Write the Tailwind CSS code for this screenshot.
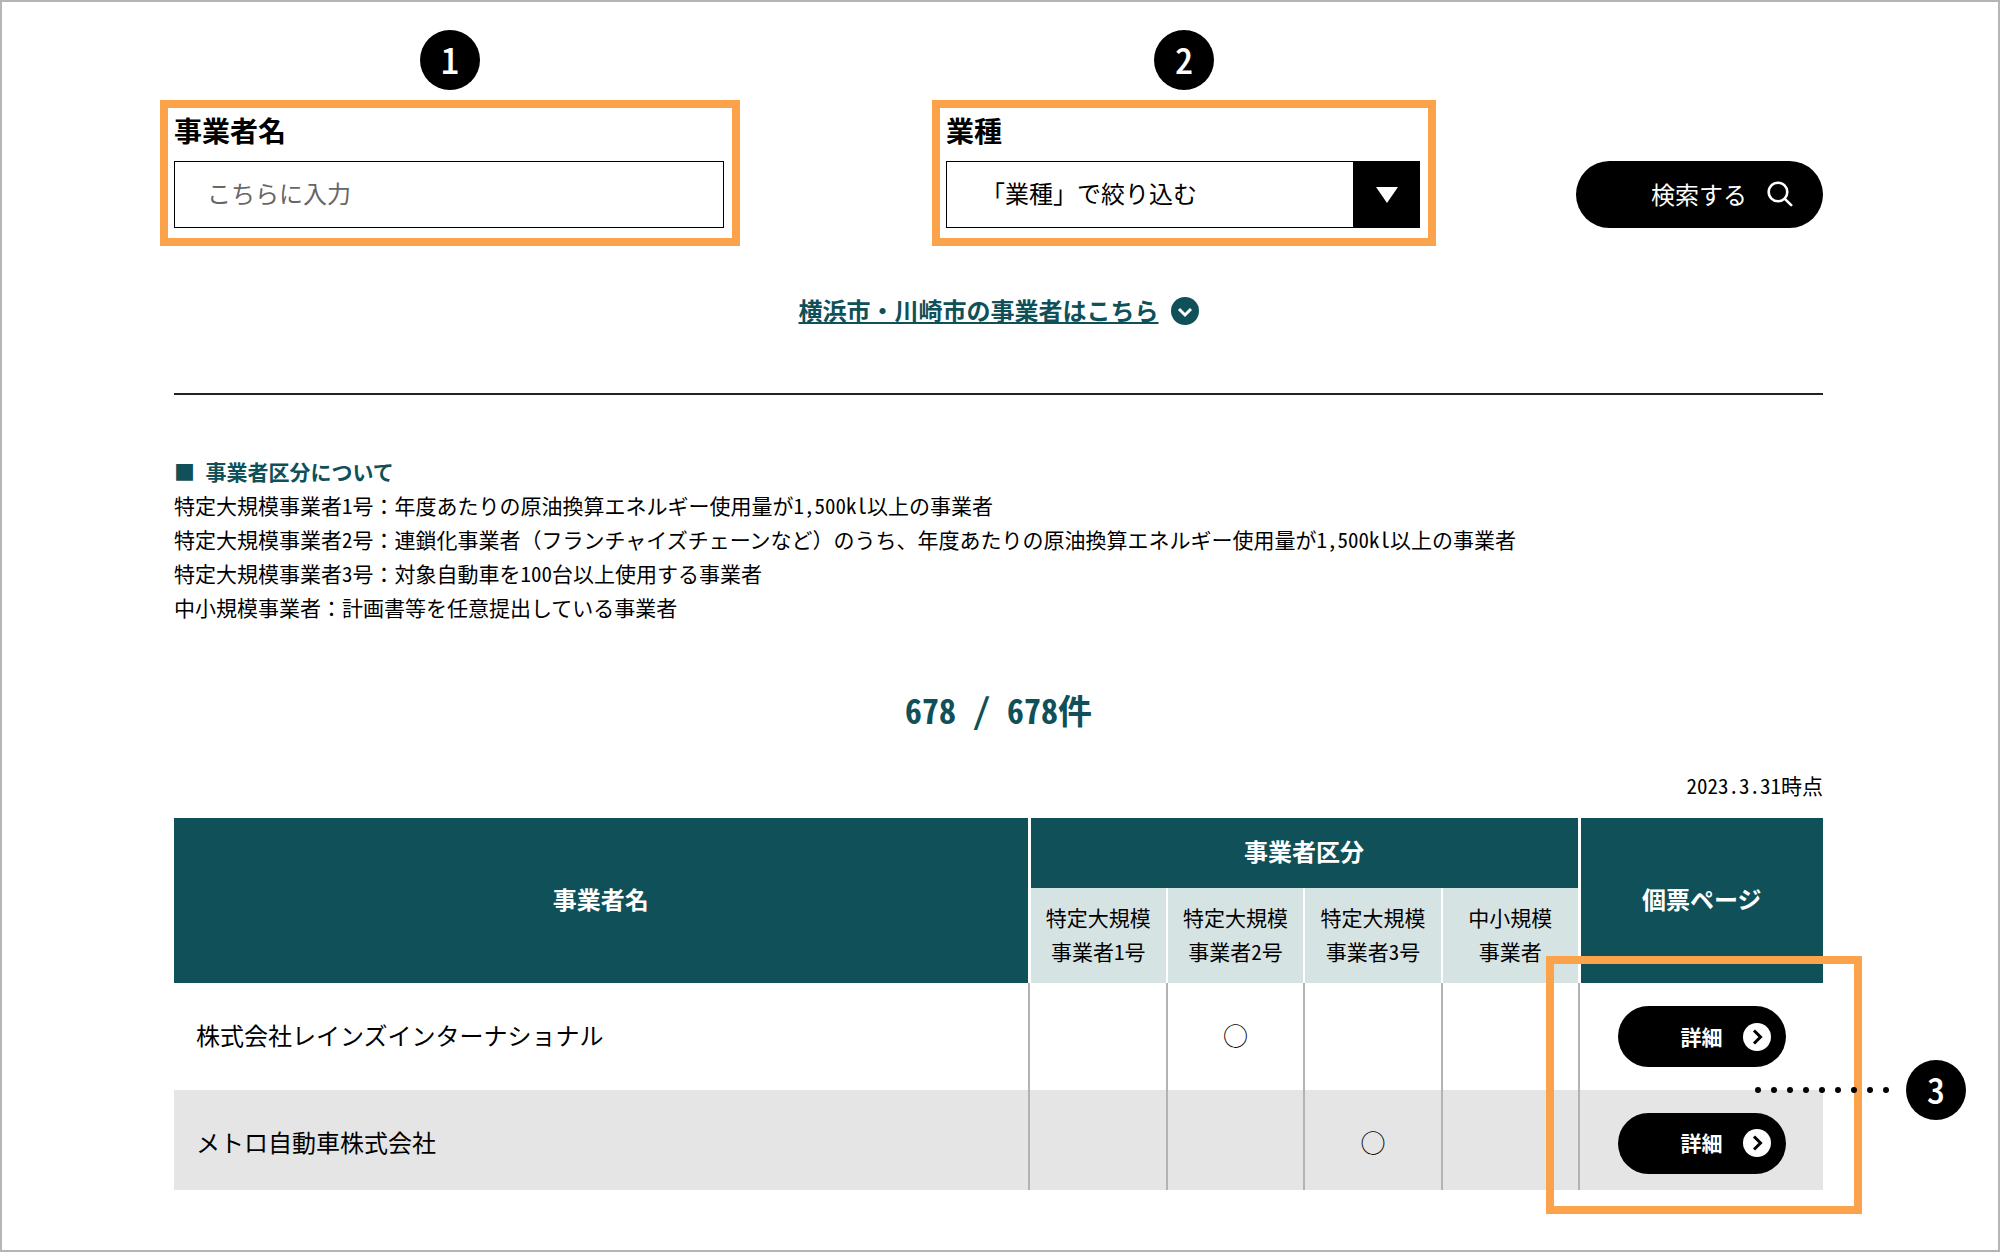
<!DOCTYPE html>
<html lang="ja">
<head>
<meta charset="utf-8">
<meta name="viewport" content="width=device-width, initial-scale=1">
<title>事業者検索</title>
<script src="https://cdn.jsdelivr.net/npm/@tailwindcss/browser@4"></script>
</head>
<body class="min-h-screen border-2 border-[#b5b5b5] bg-white pt-7 pr-[175px] pb-[60px] pl-[172px] font-['Noto_Sans_CJK_JP',sans-serif] text-[21px] leading-[34px] text-black">

  <!-- 検索フォーム -->
  <form class="flex items-end">
    <div class="-ml-3.5 flex flex-[580] flex-col items-center">
      <span class="flex size-[60px] items-center justify-center rounded-full bg-black pb-1 text-4xl font-medium text-white [font-feature-settings:'hwid']">1</span>
      <div class="mt-2.5 w-full border-8 border-[#faa34a] pr-2 pb-2.5 pl-1.5">
        <label for="name" class="mb-[9px] block text-[28px] leading-[44px] font-bold">事業者名</label>
        <input id="name" type="text" placeholder="こちらに入力" class="block h-[67px] w-full border border-black pb-1 pl-8 text-2xl placeholder:text-[#666]">
      </div>
    </div>
    <div class="ml-48 flex flex-[504] flex-col items-center">
      <span class="flex size-[60px] items-center justify-center rounded-full bg-black pb-1 text-4xl font-medium text-white [font-feature-settings:'hwid']">2</span>
      <div class="mt-2.5 w-full border-8 border-[#faa34a] pr-2 pb-2.5 pl-1.5">
        <label for="industry" class="mb-[9px] block text-[28px] leading-[44px] font-bold">業種</label>
        <div class="relative">
          <select id="industry" class="block h-[67px] w-full appearance-none border border-black bg-white pb-1 pl-[34px] text-2xl">
            <option>「業種」で絞り込む</option>
          </select>
          <span class="pointer-events-none absolute inset-y-0 right-0 flex w-[67px] items-center justify-center bg-black">
            <svg class="h-4 w-[22px]" viewBox="0 0 22 16" fill="#fff"><path d="M0 0h22L11 16z"/></svg>
          </span>
        </div>
      </div>
    </div>
    <button type="submit" class="mb-[18px] ml-[140px] flex h-[67px] w-[247px] items-center justify-end gap-5 rounded-full bg-black pr-[30px] pb-0.5 text-2xl text-white">
      検索する
      <svg class="size-[26px]" viewBox="0 0 26 26" fill="none" stroke="#fff" stroke-width="2.6" stroke-linecap="round"><circle cx="11" cy="11" r="9.3"/><path d="M17.8 17.8l6.4 6.4"/></svg>
    </button>
  </form>

  <!-- 横浜市・川崎市へのリンク -->
  <div class="mt-[46px] flex items-center justify-center gap-3 text-2xl leading-9 font-bold text-[#0f5059]">
    <a href="#other" class="pb-0.5 underline decoration-2 underline-offset-2 [text-decoration-skip-ink:none]">横浜市・川崎市の事業者はこちら</a>
    <svg class="size-7" viewBox="0 0 28 28"><circle cx="14" cy="14" r="14" fill="#0f5059"/><path d="M8 12l6 6 6-6" fill="none" stroke="#fff" stroke-width="3"/></svg>
  </div>

  <hr class="mt-[63px] border-t-2 border-[#222]">

  <!-- 事業者区分の説明 -->
  <section class="mt-[59px]">
    <h2 class="font-bold text-[#0f5059] [font-feature-settings:'hwid']">■ 事業者区分について</h2>
    <p>特定大規模事業者<span class="[font-feature-settings:'hwid']">1</span>号：年度あたりの原油換算エネルギー使用量が<span class="[font-feature-settings:'hwid']">1,500kl</span>以上の事業者</p>
    <p>特定大規模事業者<span class="[font-feature-settings:'hwid']">2</span>号：連鎖化事業者（フランチャイズチェーンなど）のうち、年度あたりの原油換算エネルギー使用量が<span class="[font-feature-settings:'hwid']">1,500kl</span>以上の事業者</p>
    <p>特定大規模事業者<span class="[font-feature-settings:'hwid']">3</span>号：対象自動車を<span class="[font-feature-settings:'hwid']">100</span>台以上使用する事業者</p>
    <p>中小規模事業者：計画書等を任意提出している事業者</p>
  </section>

  <p class="mt-[62px] text-center text-[34px] leading-[48px] font-bold text-[#0f5059] [font-feature-settings:'hwid']">678 / 678件</p>
  <p class="mt-[34px] text-right [font-feature-settings:'hwid']">2023.3.31時点</p>

  <!-- 事業者一覧 -->
  <div class="relative mt-4">
    <table class="w-full table-fixed border-collapse [font-feature-settings:'hwid']">
      <colgroup>
        <col>
        <col class="w-[138px]">
        <col class="w-[137px]">
        <col class="w-[138px]">
        <col class="w-[137px]">
        <col class="w-[244px]">
      </colgroup>
      <thead>
        <tr class="h-[70px] bg-[#0f5059] text-2xl text-white">
          <th rowspan="2" class="pb-1 font-bold">事業者名</th>
          <th colspan="4" class="border-x-3 border-white pb-1 font-bold">事業者区分</th>
          <th rowspan="2" class="pb-1 font-bold">個票ページ</th>
        </tr>
        <tr class="h-[95px] bg-[#d6e3e3]">
          <th class="border-l-3 border-white pb-1 font-normal">特定大規模<br>事業者1号</th>
          <th class="border-l-2 border-white pb-1 font-normal">特定大規模<br>事業者2号</th>
          <th class="border-l-2 border-white pb-1 font-normal">特定大規模<br>事業者3号</th>
          <th class="border-r-3 border-l-2 border-white pb-1 font-normal">中小規模<br>事業者</th>
        </tr>
      </thead>
      <tbody class="text-2xl">
        <tr class="h-[107px]">
          <td class="pb-1 pl-[22px]">株式会社レインズインターナショナル</td>
          <td class="border-l-2 border-[#b3b3b3]"></td>
          <td class="border-l-2 border-[#b3b3b3] pb-1 text-center font-bold">◯</td>
          <td class="border-l-2 border-[#b3b3b3]"></td>
          <td class="border-x-2 border-[#b3b3b3]"></td>
          <td>
            <a href="#detail-1" class="mx-auto flex h-[61px] w-42 items-center justify-end gap-5 rounded-full bg-black pr-[15px] text-[21px] font-bold text-white">
              <span class="pb-0.5">詳細</span>
              <svg class="size-7" viewBox="0 0 28 28"><circle cx="14" cy="14" r="14" fill="#fff"/><path d="M11 7.5l6.5 6.5-6.5 6.5" fill="none" stroke="#000" stroke-width="3"/></svg>
            </a>
          </td>
        </tr>
        <tr class="h-[100px] bg-[#e5e5e5]">
          <td class="pt-1 pl-[22px]">メトロ自動車株式会社</td>
          <td class="border-l-2 border-[#b3b3b3]"></td>
          <td class="border-l-2 border-[#b3b3b3]"></td>
          <td class="border-l-2 border-[#b3b3b3] pt-1 text-center font-bold">◯</td>
          <td class="border-x-2 border-[#b3b3b3]"></td>
          <td class="pt-1.5">
            <a href="#detail-2" class="mx-auto flex h-[61px] w-42 items-center justify-end gap-5 rounded-full bg-black pr-[15px] text-[21px] font-bold text-white">
              <span class="pb-0.5">詳細</span>
              <svg class="size-7" viewBox="0 0 28 28"><circle cx="14" cy="14" r="14" fill="#fff"/><path d="M11 7.5l6.5 6.5-6.5 6.5" fill="none" stroke="#000" stroke-width="3"/></svg>
            </a>
          </td>
        </tr>
      </tbody>
    </table>

    <!-- 説明用の枠と番号 -->
    <div class="pointer-events-none absolute top-[138px] -right-[39px] h-[258px] w-[316px] border-8 border-[#faa34a]"></div>
    <div class="pointer-events-none absolute top-[242px] -right-[143px] flex items-center gap-[17px]">
      <svg class="h-1.5 w-[134px]" viewBox="0 0 134 6"><path d="M3 3h129" stroke="#000" stroke-width="6" stroke-linecap="round" stroke-dasharray="0 16"/></svg>
      <span class="flex size-[60px] items-center justify-center rounded-full bg-black pb-1 text-4xl font-medium text-white [font-feature-settings:'hwid']">3</span>
    </div>
  </div>
</body>
</html>
